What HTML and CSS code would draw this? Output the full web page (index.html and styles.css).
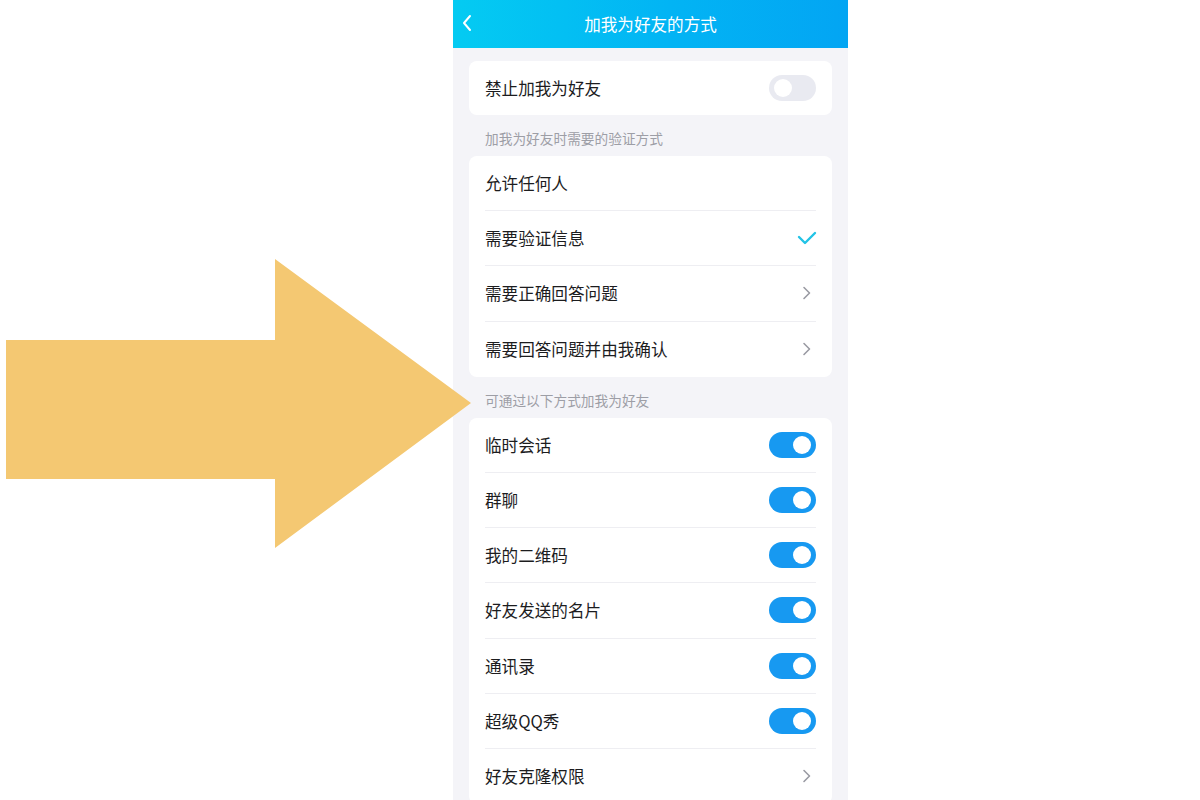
FILE: index.html
```html
<!DOCTYPE html>
<html lang="zh-CN">
<head>
  <meta charset="UTF-8">
  <title>加我为好友的方式</title>
  <link rel="stylesheet" href="styles.css">
</head>
<body>
  <div class="stage">
    <svg class="pointer" width="470" height="292" viewBox="0 0 470 292">
      <polygon points="0,81 269,81 269,0 465,144 269,289 269,220 0,220" fill="#f4c872"/>
    </svg>

    <div class="phone">
      <div class="topbar">
        <svg class="back" width="12" height="18" viewBox="0 0 12 18">
          <polyline points="9,2 3,9 9,16" fill="none" stroke="#fff" stroke-width="2" stroke-linecap="round" stroke-linejoin="round"/>
        </svg>
        <span class="title">加我为好友的方式</span>
      </div>

      <div class="content">
        <div class="card">
          <div class="row first-row">
            <span>禁止加我为好友</span>
            <span class="switch off"></span>
          </div>
        </div>

        <div class="section-label">加我为好友时需要的验证方式</div>
        <div class="card">
          <div class="row"><span>允许任何人</span></div>
          <div class="row">
            <span>需要验证信息</span>
            <svg class="check" width="20" height="14" viewBox="0 0 20 14">
              <polyline points="2,6 8,12 18,2" fill="none" stroke="#22c3e6" stroke-width="2.4" stroke-linecap="round" stroke-linejoin="round"/>
            </svg>
          </div>
          <div class="row">
            <span>需要正确回答问题</span>
            <svg class="chev" width="10" height="14" viewBox="0 0 10 14">
              <polyline points="2,1.5 7.5,7 2,12.5" fill="none" stroke="#9a9ba3" stroke-width="1.6" stroke-linecap="round" stroke-linejoin="round"/>
            </svg>
          </div>
          <div class="row">
            <span>需要回答问题并由我确认</span>
            <svg class="chev" width="10" height="14" viewBox="0 0 10 14">
              <polyline points="2,1.5 7.5,7 2,12.5" fill="none" stroke="#9a9ba3" stroke-width="1.6" stroke-linecap="round" stroke-linejoin="round"/>
            </svg>
          </div>
        </div>

        <div class="section-label">可通过以下方式加我为好友</div>
        <div class="card">
          <div class="row"><span>临时会话</span><span class="switch on"></span></div>
          <div class="row"><span>群聊</span><span class="switch on"></span></div>
          <div class="row"><span>我的二维码</span><span class="switch on"></span></div>
          <div class="row"><span>好友发送的名片</span><span class="switch on"></span></div>
          <div class="row"><span>通讯录</span><span class="switch on"></span></div>
          <div class="row"><span>超级QQ秀</span><span class="switch on"></span></div>
          <div class="row">
            <span>好友克隆权限</span>
            <svg class="chev" width="10" height="14" viewBox="0 0 10 14">
              <polyline points="2,1.5 7.5,7 2,12.5" fill="none" stroke="#9a9ba3" stroke-width="1.6" stroke-linecap="round" stroke-linejoin="round"/>
            </svg>
          </div>
        </div>
      </div>
    </div>
  </div>
</body>
</html>
```

FILE: styles.css
```css
body {
  margin: 0;
  background-color: #fff;
  font-family: "Noto Sans CJK SC", "Noto Sans", sans-serif;
  overflow: hidden;
}

.stage {
  position: relative;
  width: 1200px;
  height: 800px;
  display: flex;
  padding-left: 453px;
  box-sizing: border-box;
}

.pointer {
  position: absolute;
  left: 6px;
  top: 259px;
  z-index: 2;
}

.phone {
  width: 395px;
  height: 800px;
  background-color: #f4f4f8;
  overflow: hidden;
}

.topbar {
  height: 48px;
  background: linear-gradient(90deg, #04cbf2 0%, #02b4f4 55%, #03a5f3 100%);
  display: flex;
  align-items: center;
  justify-content: center;
  position: relative;
}

.back {
  position: absolute;
  left: 8px;
  top: 14px;
}

.title {
  color: #fff;
  font-size: 16.6px;
}

.content {
  padding: 13px 16px 0;
}

.card {
  background-color: #fff;
  border-radius: 8px;
  padding: 0 16px;
}

.row {
  height: 55.2px;
  display: flex;
  align-items: center;
  justify-content: space-between;
  font-size: 16.6px;
  color: #1c1c1e;
  border-bottom: 1px solid #eeeef2;
  box-sizing: border-box;
}

.row:last-child {
  border-bottom: none;
}

.first-row {
  height: 54px;
}

.section-label {
  padding: 15px 16px 10px;
  font-size: 13.7px;
  line-height: 16px;
  color: #9d9ea6;
}

.switch {
  width: 47px;
  height: 26px;
  border-radius: 13px;
  position: relative;
  flex-shrink: 0;
}

.switch::after {
  content: "";
  position: absolute;
  top: 4px;
  width: 18px;
  height: 18px;
  border-radius: 50%;
  background-color: #fff;
}

.switch.on {
  background-color: #1799f1;
}

.switch.on::after {
  right: 5px;
}

.switch.off {
  background-color: #e9eaf1;
}

.switch.off::after {
  left: 5px;
}

.check {
  margin-right: -1px;
}

.chev {
  margin-right: 4px;
}
```
